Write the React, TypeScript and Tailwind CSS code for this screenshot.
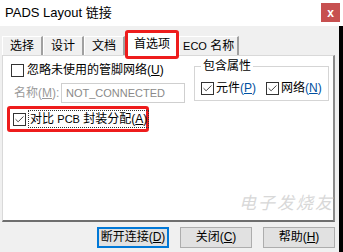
import { Check } from "lucide-react"

const font = { fontFamily: '"Liberation Sans", "Noto Sans CJK SC", sans-serif' }

function Box({ checked }: { checked?: boolean }) {
  return (
    <span className="w-[13px] h-[13px] border border-[#333] bg-white flex items-center justify-center shrink-0">
      {checked && <Check className="w-[11px] h-[11px] text-[#333]" strokeWidth={2} />}
    </span>
  )
}

function Tab({ label, selected, tight }: { label: React.ReactNode; selected?: boolean; tight?: boolean }) {
  if (selected) {
    return (
      <div className="relative h-[25px] px-[8px] bg-white border-l border-t border-r border-[#d9d9d9] flex items-center text-[12px] text-black -mb-px z-10">
        {label}
        <div className="absolute -left-[1px] -top-[2px] -right-[1px] -bottom-[3px] border-[3px] border-[#ee1c1c] rounded-[3px]" />
      </div>
    )
  }
  return (
    <div
      className={
        "h-[19px] bg-[#f0f0f0] border-l border-t border-white border-r-2 border-r-[#a0a0a0] flex items-center text-[12px] text-black " +
        (tight ? "px-[3px]" : "px-[7px]")
      }
    >
      {label}
    </div>
  )
}

function Button({ label, hotkey, primary }: { label: string; hotkey: string; primary?: boolean }) {
  return (
    <div
      className={
        "w-[72px] h-[21px] flex items-center justify-center text-[12px] text-black " +
        (primary ? "border-2 border-[#0078d7] bg-[#e1e1e1]" : "border border-[#adadad] bg-[#e1e1e1]")
      }
    >
      {label}(<span className="underline">{hotkey}</span>)
    </div>
  )
}

export default function App() {
  return (
    <div className="w-[343px] h-[252px] bg-white overflow-hidden flex flex-col whitespace-nowrap leading-[16px]" style={font}>
      {/* 标题栏 */}
      <div className="h-[26px] flex items-start justify-between bg-white">
        <div className="pl-[5px] pt-[5px] text-[13px] text-black">PADS Layout 链接</div>
        <div className="mt-[3px] mr-[3px] w-[19px] h-[19px] bg-[#c75050] text-white flex items-center justify-center text-[12px] font-bold leading-none">
          x
        </div>
      </div>

      <div className="flex-1 flex">
        <div className="flex-1 bg-[#f0f0f0] flex flex-col">
          {/* 标签页 */}
          <div className="h-[29px] flex items-end pl-[2px] pr-[4px]">
            <Tab label="选择" />
            <Tab label="设计" />
            <Tab label="文档" />
            <Tab label="首选项" selected />
            <Tab
              tight
              label={
                <span>
                  <span className="text-[11px]">ECO</span> 名称
                </span>
              }
            />
          </div>

          {/* 内容面板 */}
          <div className="relative ml-[2px] mr-[4px] h-[167px] bg-white border border-[#d9d9d9] border-r-2 border-r-[#8a8a8a] border-b-2 border-b-[#6e6e6e]">
            <div className="flex pt-[5px]">
              <div className="flex flex-col w-[188px]">
                <div className="flex items-center gap-[3px] pl-[8px] h-[18px] text-[12px] text-black">
                  <Box />
                  <span>
                    忽略未使用的管脚网络(<span className="underline">U</span>)
                  </span>
                </div>
                <div className="flex items-center mt-[4px] pl-[11px] h-[20px]">
                  <span className="text-[12px] text-[#9a9a9a] w-[47px]">
                    名称(<span className="underline">M</span>):
                  </span>
                  <div className="w-[124px] h-[20px] border border-[#cfcfcf] flex items-center pl-[4px] text-[11px] text-[#8a8a8a]">
                    NOT_CONNECTED
                  </div>
                </div>
              </div>
              <div className="relative mt-[5px] ml-[3px] w-[135px] h-[35px] border border-[#d5d5d5]">
                <span className="absolute -top-[9px] left-[6px] bg-white px-[2px] text-[12px] text-black">
                  包含属性
                </span>
                <div className="flex items-center gap-[10px] pl-[6px] pt-[13px] text-[12px] text-black">
                  <div className="flex items-center gap-[2px]">
                    <Box checked />
                    <span>
                      元件<span className="text-[#0050a0]">(<span className="underline">P</span>)</span>
                    </span>
                  </div>
                  <div className="flex items-center gap-[2px]">
                    <Box checked />
                    <span>
                      网络<span className="text-[#0050a0]">(<span className="underline">N</span>)</span>
                    </span>
                  </div>
                </div>
              </div>
            </div>

            <div className="ml-[4px] mt-[3px] w-[142px] h-[26px] border-[3px] border-[#ee1c1c] rounded-[3px] flex items-center gap-[2px] pl-[3px] text-[12px] text-black">
              <Box checked />
              <span className="border border-dotted border-[#333] px-px">
                对比 <span className="text-[11px]">PCB</span> 封装分配(<span className="underline">A</span>)
              </span>
            </div>

            {/* 水印 */}
            <div className="absolute left-[236px] top-[140px] text-[17px] italic text-[#c8c8c8] opacity-70 tracking-[2px]">
              电子发烧友
            </div>
          </div>

          {/* 按钮 */}
          <div className="flex-1 flex items-center justify-end gap-[11px] pr-[4px]">
            <Button label="断开连接" hotkey="D" primary />
            <Button label="关闭" hotkey="C" />
            <Button label="帮助" hotkey="H" />
          </div>
        </div>
        <div className="w-[4px] bg-black" />
      </div>
    </div>
  )
}
